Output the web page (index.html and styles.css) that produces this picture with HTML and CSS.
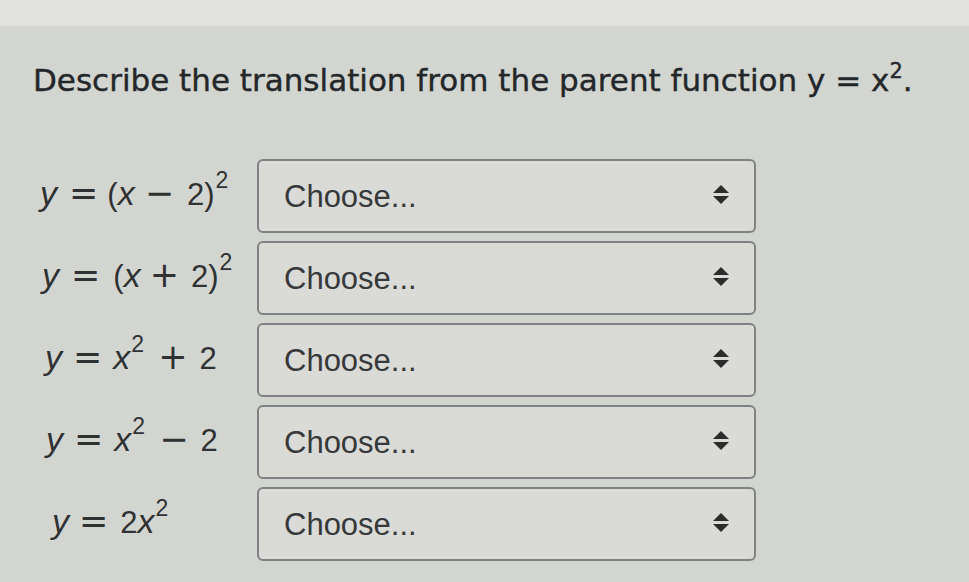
FILE: index.html
```html
<!DOCTYPE html>
<html lang="en">
<head>
<meta charset="utf-8">
<title>Describe the translation</title>
<link rel="stylesheet" href="styles.css">
</head>
<body>
<div class="topstrip"></div>
<main class="content">
  <h1 class="title">Describe the translation from the parent function y = x<sup class="tsup">2</sup>.</h1>
  <div class="rows">
    <div class="label">
      <span class="eq eq1"><span class="v">y</span><span class="op o1">=</span>(<span class="v">x</span><span class="op o2">−</span>2)<sup class="sup">2</sup></span>
    </div>
    <div class="select"><span class="choose">Choose...</span><svg class="arrows" width="16" height="19" viewBox="0 0 16 19"><path d="M8 0 L16 8 L0 8 Z M0 11 L16 11 L8 19 Z" fill="#2c2c2c"/></svg></div>

    <div class="label">
      <span class="eq eq2"><span class="v">y</span><span class="op o1">=</span>(<span class="v">x</span><span class="op o2">+</span>2)<sup class="sup">2</sup></span>
    </div>
    <div class="select"><span class="choose">Choose...</span><svg class="arrows" width="16" height="19" viewBox="0 0 16 19"><path d="M8 0 L16 8 L0 8 Z M0 11 L16 11 L8 19 Z" fill="#2c2c2c"/></svg></div>

    <div class="label">
      <span class="eq eq3"><span class="v">y</span><span class="op o1">=</span><span class="v">x</span><sup class="sup">2</sup><span class="op o2">+</span>2</span>
    </div>
    <div class="select"><span class="choose">Choose...</span><svg class="arrows" width="16" height="19" viewBox="0 0 16 19"><path d="M8 0 L16 8 L0 8 Z M0 11 L16 11 L8 19 Z" fill="#2c2c2c"/></svg></div>

    <div class="label">
      <span class="eq eq4"><span class="v">y</span><span class="op o1">=</span><span class="v">x</span><sup class="sup">2</sup><span class="op o2">−</span>2</span>
    </div>
    <div class="select"><span class="choose">Choose...</span><svg class="arrows" width="16" height="19" viewBox="0 0 16 19"><path d="M8 0 L16 8 L0 8 Z M0 11 L16 11 L8 19 Z" fill="#2c2c2c"/></svg></div>

    <div class="label">
      <span class="eq eq5"><span class="v">y</span><span class="op o1">=</span>2<span class="v">x</span><sup class="sup">2</sup></span>
    </div>
    <div class="select"><span class="choose">Choose...</span><svg class="arrows" width="16" height="19" viewBox="0 0 16 19"><path d="M8 0 L16 8 L0 8 Z M0 11 L16 11 L8 19 Z" fill="#2c2c2c"/></svg></div>
  </div>
</main>
</body>
</html>
```

FILE: styles.css
```css
html, body {
  margin: 0;
  padding: 0;
}

body {
  width: 969px;
  height: 582px;
  overflow: hidden;
  background: #d3d6d0;
  color: #2d3032;
}

.topstrip {
  height: 26px;
  background: #e1e2de;
}

.content {
  padding: 36px 0 0 33px;
}

.title {
  margin: 0;
  font-family: "DejaVu Sans", sans-serif;
  font-weight: normal;
  font-size: 31px;
  line-height: 36px;
  color: #23272a;
  white-space: nowrap;
  -webkit-text-stroke: 0.4px #23272a;
}

.tsup {
  font-size: 21px;
  vertical-align: 13px;
  line-height: 0;
}

.rows {
  margin-top: 61px;
  display: grid;
  grid-template-columns: 224px 499px;
  grid-auto-rows: 74px;
  row-gap: 8px;
}

.label {
  display: flex;
  align-items: center;
  padding-left: 7px;
  padding-bottom: 2px;
  font-family: "Liberation Sans", Arial, sans-serif;
  font-size: 31px;
  line-height: 36px;
  color: #2f3133;
  white-space: nowrap;
}

.v {
  font-style: italic;
  font-size: 34px;
  line-height: 0;
}

.op {
  font-family: "DejaVu Sans", sans-serif;
  font-size: 35px;
  line-height: 0;
}

.eq1 .o1 { margin: 0 9px 0 12px; }
.eq1 .o2 { margin: 0 13px 0 10px; }

.eq2 { padding-left: 2px; }
.eq2 .o1 { margin: 0 13px 0 12px; }
.eq2 .o2 { margin: 0 12px 0 9px; }

.eq3 { padding-left: 5px; }
.eq3 .o1 { margin: 0 11px 0 11px; }
.eq3 .o2 { margin: 0 12px 0 14px; }

.eq4 { padding-left: 6px; }
.eq4 .o1 { margin: 0 11px 0 11px; }
.eq4 .o2 { margin: 0 12px 0 14px; }

.eq5 { padding-left: 12px; }
.eq5 .o1 { margin: 0 12px 0 10px; }

.sup {
  font-size: 23px;
  vertical-align: 17px;
  line-height: 0;
  margin-left: 1px;
}

.select {
  box-sizing: border-box;
  display: flex;
  align-items: center;
  justify-content: space-between;
  padding: 0 25px 0 25px;
  border: 2px solid #7f8184;
  border-radius: 6px;
  background: #dadbd7;
  font-family: "Liberation Sans", Arial, sans-serif;
  font-size: 31px;
  color: #36383a;
}

.choose {
  padding-top: 2px;
}

.arrows {
  display: block;
  margin-top: -4px;
}
```
